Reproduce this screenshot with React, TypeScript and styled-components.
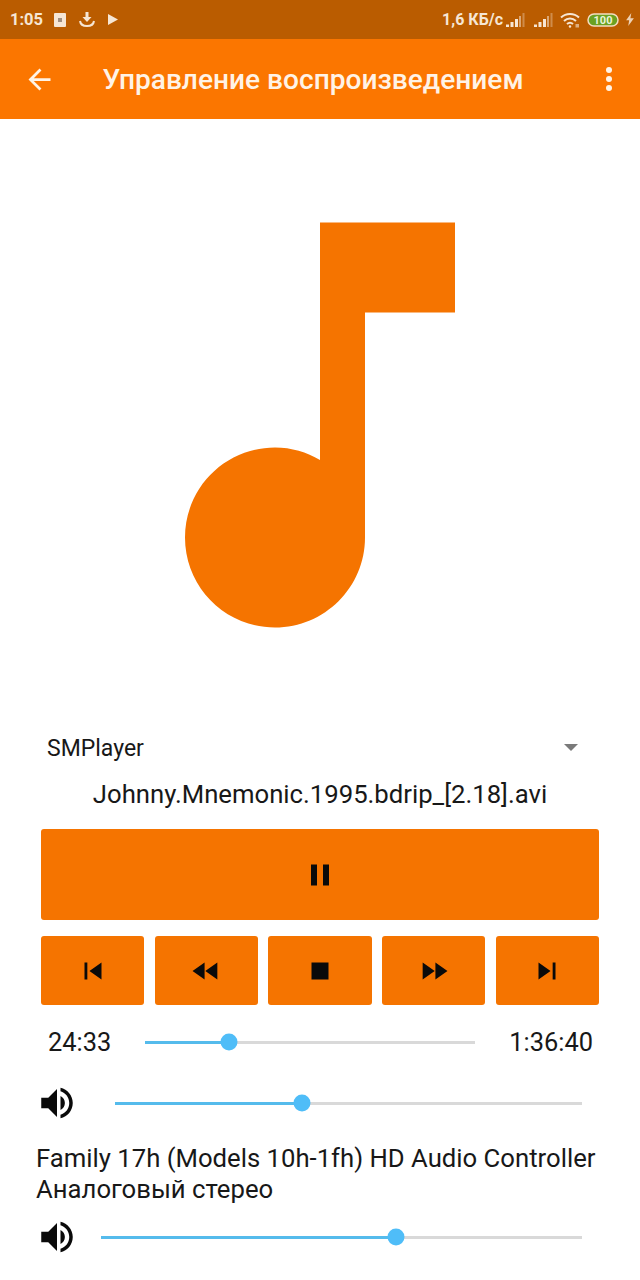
import React from 'react'
import styled, { createGlobalStyle } from 'styled-components'

const ORANGE = '#f57400'

const GlobalStyle = createGlobalStyle`
  html, body {
    margin: 0;
    padding: 0;
    background: #fff;
  }
  body {
    font-family: Roboto, "Noto Sans", sans-serif;
    color: #181818;
  }
`

const Page = styled.div`
  width: 640px;
  height: 1280px;
  overflow: hidden;
  background: #fff;
  display: flex;
  flex-direction: column;
`

const StatusBar = styled.div`
  height: 39px;
  flex: none;
  background: #ba5c00;
  display: flex;
  align-items: center;
  padding: 0 6px 0 10px;
  color: #f6e6d4;
  box-sizing: border-box;
`

const StatusTime = styled.span`
  font-size: 16.5px;
  font-weight: 700;
  margin-right: 11px;
`

const StatusLeft = styled.div`
  display: flex;
  align-items: center;
  gap: 13px;
`

const StatusRight = styled.div`
  margin-left: auto;
  display: flex;
  align-items: center;
  gap: 7px;
`

const Speed = styled.span`
  font-size: 16px;
  font-weight: 700;
  margin-right: -6px;
`

const Toolbar = styled.header`
  height: 80px;
  flex: none;
  background: #fb7600;
  display: flex;
  align-items: center;
  padding: 0 27px 0 23px;
  color: #fff3e6;
`

const Title = styled.h1`
  margin: 0 0 0 46.5px;
  font-size: 28.1px;
  font-weight: 500;
  flex: 1;
`

const Art = styled.div`
  height: 609px;
  flex: none;
  display: flex;
  justify-content: center;
  padding-top: 35.5px;
  box-sizing: border-box;
`

const Selector = styled.div`
  height: 40px;
  flex: none;
  display: flex;
  align-items: center;
  justify-content: space-between;
  padding: 0 62px 0 47px;
  font-size: 23px;
`

const Caret = styled.span`
  width: 0;
  height: 0;
  border-left: 7px solid transparent;
  border-right: 7px solid transparent;
  border-top: 7px solid #7a7a7a;
  margin-top: -2px;
`

const FileName = styled.div`
  margin-top: 9px;
  height: 34px;
  line-height: 34px;
  text-align: center;
  font-size: 25.7px;
`

const Controls = styled.div`
  margin-top: 18px;
  padding: 0 41px;
  display: flex;
  flex-direction: column;
  gap: 16px;
`

const ControlRow = styled.div`
  display: flex;
  gap: 10.5px;
`

const ControlButton = styled.button<{ $tall?: boolean }>`
  flex: ${({ $tall }) => ($tall ? 'none' : 1)};
  height: ${({ $tall }) => ($tall ? 91 : 69)}px;
  border: 0;
  padding: 0;
  background: ${ORANGE};
  border-radius: 3px;
  display: flex;
  align-items: center;
  justify-content: center;
`

const TimeRow = styled.div`
  margin-top: 17px;
  height: 40px;
  display: flex;
  align-items: center;
  gap: 34px;
  padding: 0 47px 0 48px;
  font-size: 25.4px;
`

const VolumeRow = styled.div<{ $top: number; $inset: number }>`
  margin-top: ${({ $top }) => $top}px;
  height: 44px;
  display: flex;
  align-items: center;
  padding: 0 58px 0 36px;
  gap: ${({ $inset }) => $inset}px;
`

const Track = styled.div`
  position: relative;
  flex: 1;
  height: 3px;
  background: #d9d9d9;
`

const Fill = styled.div`
  height: 100%;
  background: #55bbec;
`

const Thumb = styled.span`
  position: absolute;
  top: 50%;
  width: 17px;
  height: 17px;
  border-radius: 50%;
  background: #4fbdf8;
  transform: translate(-50%, -50%);
`

const Device = styled.div`
  margin-top: 18px;
  padding-left: 36px;
  font-size: 25.7px;
  line-height: 31px;
  white-space: nowrap;
`

const Slider = ({ value }: { value: number }) => (
  <Track>
    <Fill style={{ width: `${value}%` }} />
    <Thumb style={{ left: `${value}%` }} />
  </Track>
)

const Icon = ({ d, size = 34 }: { d: string; size?: number }) => (
  <svg width={size} height={size} viewBox="0 0 24 24" fill="#0a0a0a">
    <path d={d} />
  </svg>
)

const PAUSE = 'M6 19h4V5H6v14zm8-14v14h4V5h-4z'
const SMALL_ICONS = [
  'M6 6h2v12H6zm3.5 6l8.5 6V6z',
  'M11 18V6l-8.5 6 8.5 6zm.5-6l8.5 6V6l-8.5 6z',
  'M6 6h12v12H6z',
  'M4 18l8.5-6L4 6v12zm9-12v12l8.5-6L13 6z',
  'M6 18l8.5-6L6 6v12zM16 6v12h2V6h-2z',
]
const SPEAKER =
  'M3 9v6h4l5 5V4L7 9H3zm13.5 3c0-1.77-1.02-3.29-2.5-4.03v8.05c1.48-.73 2.5-2.25 2.5-4.02zM14 3.23v2.06c2.89.86 5 3.54 5 6.71s-2.11 5.85-5 6.71v2.06c4.01-.91 7-4.49 7-8.77s-2.99-7.86-7-8.77z'

const SignalIcon = () => (
  <svg width="21" height="16" viewBox="0 0 21 16" fill="currentColor">
    <rect x="2" y="12.500" width="3" height="2.500" />
    <rect x="6.500" y="10" width="3" height="5" />
    <rect x="11" y="7" width="3" height="8" />
    <rect x="15" y="4" width="2" height="11" opacity="0.55" />
    <rect x="18.500" y="1" width="2" height="14" opacity="0.35" />
  </svg>
)

const App = () => (
  <Page>
    <GlobalStyle />
    <StatusBar>
      <StatusTime>1:05</StatusTime>
      <StatusLeft>
        <svg width="12" height="14" viewBox="0 0 12 14">
          <rect width="12" height="14" rx="1" fill="currentColor" />
          <rect x="4" y="5" width="4" height="4" fill="#a08f80" />
        </svg>
        <svg width="16" height="15" viewBox="0 0 16 15" fill="none" stroke="currentColor">
          <path d="M8 0v6" strokeWidth="3" />
          <path d="M3.500 5h9L8 10z" fill="currentColor" stroke="none" />
          <path d="M1 9c.5 3.500 3 5 7 5s6.500-1.500 7-5" strokeWidth="2" />
        </svg>
        <svg width="10" height="11" viewBox="0 0 10 11" fill="currentColor">
          <path d="M0 0l10 5.500L0 11z" />
        </svg>
      </StatusLeft>
      <StatusRight>
        <Speed>1,6 КБ/с</Speed>
        <SignalIcon />
        <SignalIcon />
        <svg width="20" height="16" viewBox="0 0 20 16" fill="none" stroke="currentColor" strokeWidth="2">
          <path d="M1 5.500c5-4.800 13-4.800 18 0" />
          <path d="M4 9c3.500-3.200 8.500-3.200 12 0" />
          <path d="M7 12c2-1.700 4-1.700 6 0" />
          <circle cx="10" cy="14.500" r="1.200" fill="currentColor" stroke="none" />
          <rect x="15.500" y="12" width="3.500" height="3.500" fill="currentColor" stroke="none" opacity="0.6" />
        </svg>
        <svg width="32" height="14" viewBox="0 0 32 14">
          <rect x="1" y="1" width="30" height="12" rx="6" fill="#6aa121" stroke="#f3dcc0" strokeWidth="1.500" />
          <text x="16" y="11" fontSize="11" fontWeight="700" fontFamily="Roboto, sans-serif" textAnchor="middle" fill="#e9f3d8">100</text>
        </svg>
        <svg width="8" height="13" viewBox="0 0 9 15" fill="currentColor" opacity="0.85">
          <path d="M6 0L0 8.500h3.500L2.500 15 9 6H5z" />
        </svg>
      </StatusRight>
    </StatusBar>

    <Toolbar>
      <svg width="33" height="33" viewBox="0 0 24 24" fill="currentColor">
        <path d="M20 11H7.830l5.590-5.590L12 4l-8 8 8 8 1.410-1.410L7.830 13H20v-2z" />
      </svg>
      <Title>Управление воспроизведением</Title>
      <svg width="8" height="26" viewBox="0 0 8 26" fill="currentColor">
        <circle cx="4" cy="4" r="3" />
        <circle cx="4" cy="13" r="3" />
        <circle cx="4" cy="22" r="3" />
      </svg>
    </Toolbar>

    <Art>
      <svg width="540" height="540" viewBox="0 0 24 24" fill={ORANGE}>
        <path d="M12 3v10.550c-.59-.34-1.270-.55-2-.55-2.210 0-4 1.790-4 4s1.790 4 4 4 4-1.790 4-4V7h4V3h-6z" />
      </svg>
    </Art>

    <Selector>
      <span>SMPlayer</span>
      <Caret />
    </Selector>
    <FileName>Johnny.Mnemonic.1995.bdrip_[2.18].avi</FileName>

    <Controls>
      <ControlButton $tall>
        <Icon d={PAUSE} size={36} />
      </ControlButton>
      <ControlRow>
        {SMALL_ICONS.map((d) => (
          <ControlButton key={d}>
            <Icon d={d} />
          </ControlButton>
        ))}
      </ControlRow>
    </Controls>

    <TimeRow>
      <span>24:33</span>
      <Slider value={25.4} />
      <span>1:36:40</span>
    </TimeRow>

    <VolumeRow $top={19} $inset={37}>
      <Icon d={SPEAKER} size={42} />
      <Slider value={40} />
    </VolumeRow>

    <Device>
      Family 17h (Models 10h-1fh) HD Audio Controller
      <br />
      Аналоговый стерео
    </Device>

    <VolumeRow $top={10} $inset={23}>
      <Icon d={SPEAKER} size={42} />
      <Slider value={61.3} />
    </VolumeRow>
  </Page>
)

export default App
